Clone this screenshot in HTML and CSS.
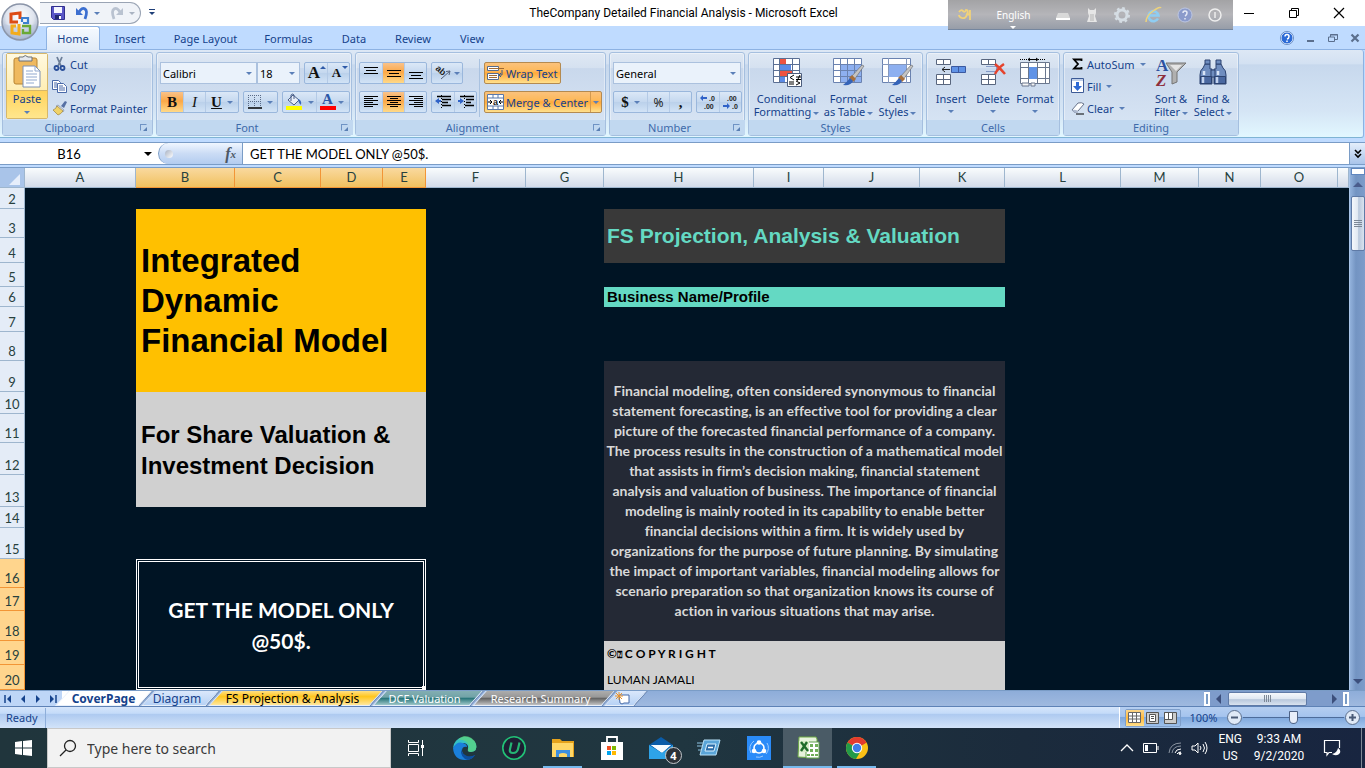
FILE: index.html
```html
<!DOCTYPE html>
<html lang="en">
<head>
    <meta charset="UTF-8">
    <meta name="viewport" content="width=device-width, initial-scale=1.0">
    <title>TheCompany Detailed Financial Analysis - Microsoft Excel</title>
    <link rel="stylesheet" href="styles.css">
</head>
<body>

    <!-- Title bar -->
    <header class="titlebar">
        <button class="office-btn" aria-label="Office Button">
            <svg width="40" height="40" viewBox="0 0 40 40">
                <defs>
                    <radialGradient id="orb" cx="50%" cy="35%" r="65%">
                        <stop offset="0" stop-color="#ffffff"/>
                        <stop offset=".6" stop-color="#dfe4ee"/>
                        <stop offset="1" stop-color="#8f9db8"/>
                    </radialGradient>
                </defs>
                <circle cx="20" cy="20" r="18" fill="url(#orb)" stroke="#8b95a8" stroke-width="1.5"/>
                <path d="M4 22q16 6 32 0a16 15 0 0 1-32 0z" fill="#b9c6e0" opacity=".6"/>
                <g fill="none">
                    <path d="M18 20h-7v-8l9-1v6" stroke="#dd4b14" stroke-width="3"/>
                    <path d="M22 20v-4h6v5h-5" stroke="#3d7fd0" stroke-width="2.2"/>
                    <path d="M19 22v10l-7-1v-7h4" stroke="#f3ac1c" stroke-width="3"/>
                    <path d="M22 24h8v7h-7v-4" stroke="#6aa935" stroke-width="2.4"/>
                </g>
            </svg>
        </button>
        <div class="quick-access">
            <button aria-label="Save">
                <svg width="14" height="14" viewBox="0 0 14 14"><path d="M.5.5h13v13h-11l-2-2z" fill="#5a57c8" stroke="#302f8e"/><path d="M3 1h8v6H3z" fill="#f4f6ff"/><path d="M4 9h6v4H4z" fill="#222a70"/><path d="M8 10h2v3H8z" fill="#fff"/></svg>
            </button>
            <button aria-label="Undo">
                <svg width="14" height="14" viewBox="0 0 14 14"><path d="M4 6Q7 1 10 3t0 10" fill="none" stroke="#3c6fd0" stroke-width="2.8"/><path d="M1 2v7h7z" fill="#3c6fd0"/></svg>
                <span class="caret"></span>
            </button>
            <button aria-label="Redo" disabled>
                <svg width="14" height="14" viewBox="0 0 14 14"><path d="M10 6Q7 1 4 3t0 10" fill="none" stroke="#b9c2d0" stroke-width="2.8"/><path d="M13 2v7H6z" fill="#b9c2d0"/></svg>
                <span class="caret grey"></span>
            </button>
        </div>
        <button class="customize" aria-label="Customize Quick Access Toolbar"><span class="caret dark"></span></button>
        <h1 class="window-title">TheCompany Detailed Financial Analysis - Microsoft Excel</h1>
        <div class="window-buttons">
            <button aria-label="Minimize"><svg width="12" height="12" viewBox="0 0 12 12"><path d="M1 6.500h10" stroke="#000"/></svg></button>
            <button aria-label="Restore"><svg width="12" height="12" viewBox="0 0 12 12" fill="none" stroke="#000"><path d="M1.500 3.500h7v7h-7zM3.500 3.500v-2h7v7h-2"/></svg></button>
            <button aria-label="Close"><svg width="12" height="12" viewBox="0 0 12 12"><path d="M1 1l10 10M11 1L1 11" stroke="#000" stroke-width="1.200"/></svg></button>
        </div>

        <!-- Floating keyboard language bar -->
        <div class="language-bar">
            <svg width="14" height="14" viewBox="0 0 14 14" fill="none" stroke="#f0d27a" stroke-width="1.800"><path d="M1 4q2-3 4-1t3-1q3 0 1 4-1 5-5 4-3-1-3-3M9 6q3 2 3-4v10"/></svg>
            <button class="language">English<span class="caret white"></span></button>
            <svg width="16" height="16" viewBox="0 0 16 16"><path d="M3 6h10l2 5H1z" fill="#d9d9d9"/><path d="M1 11h14v2H1z" fill="#fff"/></svg>
            <svg width="14" height="16" viewBox="0 0 14 16"><path d="M3 1l2 2h4l2-2v5l-1 3 2 6H2l2-6-1-3z" fill="#e6e6e6"/><path d="M6 7v7M8 7v7" stroke="#b5b5b5"/></svg>
            <svg width="16" height="16" viewBox="0 0 16 16"><circle cx="8" cy="8" r="5" fill="none" stroke="#d5dde4" stroke-width="3"/><circle cx="8" cy="8" r="7" fill="none" stroke="#d5dde4" stroke-width="2" stroke-dasharray="2.700 2.800"/></svg>
            <svg width="18" height="18" viewBox="0 0 18 18"><path d="M14 12.500a5 5 0 1 1 .500-3H5" fill="none" stroke="#8fcdf2" stroke-width="2.600"/><path d="M2 16q0-6 7-11t8-3" fill="none" stroke="#ecd27c" stroke-width="1.500"/></svg>
            <svg width="16" height="16" viewBox="0 0 16 16"><circle cx="8" cy="8" r="7" fill="#8b9bcb" stroke="#bcc6e2"/><path d="M6 6q0-2 2-2t2 2-2 3M8 11v1.500" fill="none" stroke="#e5e9f5" stroke-width="1.500"/></svg>
            <svg width="16" height="16" viewBox="0 0 16 16" fill="none" stroke="#eee"><circle cx="8" cy="8" r="6" stroke-width="1.500"/><path d="M8 5v6" stroke-width="1.500"/></svg>
        </div>
    </header>

    <!-- Ribbon tabs -->
    <nav class="tabs">
        <button class="tab active">Home</button>
        <button class="tab insert">Insert</button>
        <button class="tab page-layout">Page Layout</button>
        <button class="tab formulas">Formulas</button>
        <button class="tab data">Data</button>
        <button class="tab review">Review</button>
        <button class="tab view">View</button>
        <div class="doc-buttons">
            <button aria-label="Help"><svg width="14" height="14" viewBox="0 0 14 14"><circle cx="7" cy="7" r="6" fill="#2d6bd6" stroke="#fff" stroke-width=".8"/><circle cx="7" cy="7" r="6.600" fill="none" stroke="#5b82bd" stroke-width=".8"/><path d="M5 5.500Q5 3.500 7 3.500t2 2-2 2.500M7 9.500V11" fill="none" stroke="#fff" stroke-width="1.500"/></svg></button>
            <button aria-label="Minimize workbook"><svg width="10" height="10" viewBox="0 0 10 10"><path d="M1 8h7" stroke="#5b6f8d" stroke-width="2"/></svg></button>
            <button aria-label="Restore workbook"><svg width="10" height="10" viewBox="0 0 10 10"><path d="M.500 4h6v4.500h-6zM2.500 4V1.500h7v5h-3M2 2h8" fill="none" stroke="#5b6f8d"/></svg></button>
            <button aria-label="Close workbook"><svg width="10" height="10" viewBox="0 0 10 10"><path d="M1.500 1.500l7 7M8.500 1.500l-7 7" stroke="#5b6f8d" stroke-width="2.200"/></svg></button>
        </div>
    </nav>

    <!-- Ribbon -->
    <section class="ribbon">
        <div class="group clipboard">
            <div class="group-body">
                <button class="paste">
                    <span class="paste-icon"><svg width="30" height="34" viewBox="0 0 30 34"><rect x="2" y="3" width="23" height="26" rx="2" fill="#efb95e" stroke="#b88431"/><path d="M7 2h4q2-3 5 0h4v4H7z" fill="#e4e8ee" stroke="#6a7078"/><path d="M11 11h12l5 5v16H11z" fill="#fff" stroke="#7c90b4"/><path d="M23 11v5h5M14 16h7M14 19h11M14 22h11M14 25h11M14 28h8" stroke="#91a9cf" fill="none"/></svg></span>
                    <span class="paste-text">Paste<span class="caret"></span></span>
                </button>
                <div class="small-buttons">
                    <button><svg width="16" height="16" viewBox="0 0 16 16"><path d="M5 1l4 9M10 1L6 10" stroke="#6d7f99" stroke-width="1.800"/><circle cx="4.500" cy="12" r="2" fill="none" stroke="#2a4f99" stroke-width="1.800"/><circle cx="10.500" cy="12" r="2" fill="none" stroke="#2a4f99" stroke-width="1.800"/></svg>Cut</button>
                    <button><svg width="16" height="16" viewBox="0 0 16 16" fill="#fff" stroke="#4869a8"><path d="M.500 2.500h6l2 2v7h-8z"/><path d="M5.500 5.500h6l3 3v6h-9z"/><path d="M2 5h3M2 7h3M2 9h3M7 8h4M7 10h6M7 12h6"/></svg>Copy</button>
                    <button><svg width="16" height="16" viewBox="0 0 16 16"><path d="M9 6l4-5 2 1-3 6z" fill="#5670a4"/><path d="M6 5l6 5-1 2-7-6z" fill="#d9dee8" stroke="#76839c" stroke-width=".6"/><path d="M5 6l6 5q-2 3-5 4l-5-5q3-1 4-4z" fill="#f0d268" stroke="#9c8440" stroke-width=".7"/></svg>Format Painter</button>
                </div>
            </div>
            <div class="group-name">Clipboard<i class="launcher"></i></div>
        </div>

        <div class="group font">
            <div class="group-body rows">
                <div class="row">
                    <span class="combo font-name"><select aria-label="Font"><option>Calibri</option></select></span>
                    <span class="combo font-size"><select aria-label="Font size"><option>18</option></select></span>
                    <div class="cluster after">
                        <button class="serif big-a" aria-label="Grow Font">A<i class="up"></i></button>
                        <button class="serif small-a" aria-label="Shrink Font">A<i class="caret"></i></button>
                    </div>
                </div>
                <div class="row">
                    <div class="cluster">
                        <button class="serif on"><b>B</b></button>
                        <button class="serif"><i>I</i></button>
                        <button class="serif wide"><u>U</u><span class="caret"></span></button>
                    </div>
                    <div class="cluster">
                        <button class="wide" aria-label="Borders"><svg width="14" height="14" viewBox="0 0 14 14"><path d="M0 .500h14M0 6.500h14M.500 0v12M6.500 0v12M12.500 0v12" stroke="#5a6b88" stroke-dasharray="1 1"/><path d="M0 13h14" stroke="#000" stroke-width="1.500"/></svg><span class="caret"></span></button>
                    </div>
                    <div class="cluster">
                        <button class="wide" aria-label="Fill Color"><svg width="18" height="16" viewBox="0 0 18 16"><path d="M8 1l6 5-5 5-6-5z" fill="#e8eef8" stroke="#4a5f88"/><path d="M6 7V1q2-2 3 0v4" fill="none" stroke="#4a5f88"/><path d="M13 5q4 1 3 6-2-1-3-5z" fill="#3a69b8"/><path d="M1 12h16v4H1z" fill="#ff0"/></svg><span class="caret"></span></button>
                        <button class="wide font-color serif" aria-label="Font Color">A<span class="caret"></span></button>
                    </div>
                </div>
            </div>
            <div class="group-name">Font<i class="launcher"></i></div>
        </div>

        <div class="group alignment">
            <div class="group-body rows">
                <div class="row">
                    <div class="cluster">
                        <button aria-label="Top Align"><svg width="14" height="14" viewBox="0 0 14 14" stroke="#000"><path d="M0 1.500h14M2 4.500h10M0 7.500h14" /></svg></button>
                        <button class="on" aria-label="Middle Align"><svg width="14" height="14" viewBox="0 0 14 14" stroke="#000"><path d="M0 4.500h14M2 7.500h10M0 10.500h14"/></svg></button>
                        <button aria-label="Bottom Align"><svg width="14" height="14" viewBox="0 0 14 14" stroke="#000"><path d="M0 6.500h14M2 9.500h10M0 12.500h14"/></svg></button>
                    </div>
                    <div class="cluster">
                        <button class="orient" aria-label="Orientation"><svg width="16" height="18" viewBox="0 0 16 18"><text x="0" y="9" transform="rotate(40 5 7)" class="ab">ab</text><path d="M6 15l9-8M15 7l-4 .500M15 7l-1 4" fill="none" stroke="#53617c"/></svg><span class="caret"></span></button>
                    </div>
                </div>
                <div class="row">
                    <div class="cluster">
                        <button aria-label="Align Left"><svg width="14" height="12" viewBox="0 0 14 12" stroke="#000"><path d="M0 .500h14M0 2.500h9M0 4.500h14M0 6.500h9M0 8.500h14M0 10.500h9"/></svg></button>
                        <button class="on" aria-label="Center"><svg width="14" height="12" viewBox="0 0 14 12" stroke="#000"><path d="M0 .500h14M3 2.500h8M0 4.500h14M3 6.500h8M0 8.500h14M3 10.500h8"/></svg></button>
                        <button aria-label="Align Right"><svg width="14" height="12" viewBox="0 0 14 12" stroke="#000"><path d="M0 .500h14M5 2.500h9M0 4.500h14M5 6.500h9M0 8.500h14M5 10.500h9"/></svg></button>
                    </div>
                    <div class="cluster">
                        <button aria-label="Decrease Indent"><svg width="16" height="14" viewBox="0 0 16 14"><path d="M2 1.500h14M7 4.500h9M7 7.500h6M7 10.500h9" stroke="#000" stroke-width="1.600"/><path d="M6.500 0v14" stroke="#000" stroke-dasharray="1 2"/><path d="M0 6l4-3v2h2v2H4v2z" fill="#2f62c8"/></svg></button>
                        <button aria-label="Increase Indent"><svg width="16" height="14" viewBox="0 0 16 14"><path d="M2 1.500h14M8 4.500h8M8 7.500h5M7 10.500h9" stroke="#000" stroke-width="1.600"/><path d="M6.500 0v14" stroke="#000" stroke-dasharray="1 2"/><path d="M6 6L2 3v2H0v2h2v2z" fill="#2f62c8"/></svg></button>
                    </div>
                </div>
            </div>
            <div class="align-text">
                <button class="orange"><svg width="17" height="16" viewBox="0 0 17 16"><path d="M.500 1.500h11v4H.500zM.500 8.500h11v6H.500z" fill="#fff" stroke="#566a8c"/><path d="M2 3.500h15M2 10.500h8M2 12.500h8" stroke="#a06a32"/><path d="M15 5v5h-3M14 8l-2 2 2 2" fill="none" stroke="#3c5888"/></svg>Wrap Text</button>
                <button class="orange merge"><svg width="17" height="16" viewBox="0 0 17 16"><path d="M.500.500h16v15H.500zM.500 4h16M.500 12h16M6 0v4M11 0v4M6 12v4M11 12v4" fill="#fff" stroke="#5a78aa"/><text x="6" y="11" class="merge-a">a</text><path d="M1 8h4M3 6l2 2-2 2M12 8h4M14 6l-2 2 2 2" fill="none" stroke="#000"/></svg>Merge &amp; Center<span class="drop"><span class="caret"></span></span></button>
            </div>
            <div class="group-name">Alignment<i class="launcher"></i></div>
        </div>

        <div class="group number">
            <div class="group-body rows">
                <div class="row">
                    <span class="combo format"><select aria-label="Number format"><option>General</option></select></span>
                </div>
                <div class="row">
                    <div class="cluster">
                        <button class="wide serif dollar"><b>$</b><span class="caret"></span></button>
                        <button class="percent">%</button>
                        <button class="serif comma"><b>,</b></button>
                    </div>
                    <div class="cluster">
                        <button class="decimals" aria-label="Increase Decimal"><svg width="18" height="18" viewBox="0 0 18 18"><path d="M1 5l3-3v2h4v2H4v2z" fill="#2f62c8"/><text x="10" y="8">.0</text><text x="5" y="16">.00</text></svg></button>
                        <button class="decimals" aria-label="Decrease Decimal"><svg width="18" height="18" viewBox="0 0 18 18"><text x="5" y="8">.00</text><path d="M8 13l-3-3v2H1v2h4v2z" fill="#2f62c8"/><text x="10" y="16">.0</text></svg></button>
                    </div>
                </div>
            </div>
            <div class="group-name">Number<i class="launcher"></i></div>
        </div>

        <div class="group styles">
            <div class="group-body bigs">
                <button class="big conditional">
                    <svg width="32" height="30" viewBox="0 0 32 30"><path d="M2.500.500h26v24h-26z" fill="#fff" stroke="#5a6f94"/><path d="M9 1h6v5H9zM9 13h12v5H9z" fill="#ee5340"/><path d="M9 7h11v5H9zM9 19h5v5H9z" fill="#5b8be6"/><path d="M2 6.500h26M2 12.500h26M2 18.500h26M8.500 0v25M21.500 0v25" stroke="#5a6f94" fill="none"/><path d="M16.500 15.500h14v13h-14z" fill="#fff" stroke="#4b5c7c"/><path d="M23 17l-4 2.500 4 2.500M18 24h5M18 26h5M25 19h5M25 21.500h5M29 17l-3 6M25 23l4 2-4 2" fill="none" stroke="#000"/></svg>
                    <span>Conditional</span><span>Formatting<i class="caret"></i></span>
                </button>
                <button class="big as-table">
                    <svg width="32" height="30" viewBox="0 0 32 30"><path d="M.500.500h28v24H.500z" fill="#fff" stroke="#6a82b0"/><path d="M8 7h20v17H8z" fill="#8eb0f0"/><path d="M0 6.500h28M0 12.500h28M0 18.500h28M7.500 0v25M14.500 0v25M21.500 0v25" stroke="#6a82b0" fill="none"/><path d="M31 8l-2-1-11 12 3 3z" fill="#c4c4c4" stroke="#666" stroke-width=".6"/><path d="M19 17l4 4-3 3-4-4z" fill="#a8703c"/><path d="M17 20l3 3q-2 5-10 4 4-3 7-7z" fill="#3463b8"/></svg>
                    <span>Format</span><span>as Table<i class="caret"></i></span>
                </button>
                <button class="big cell-styles">
                    <svg width="32" height="30" viewBox="0 0 32 30"><path d="M.500.500h28v24H.500z" fill="#fff" stroke="#6a82b0"/><path d="M0 6.500h28M0 18.500h28M6.500 0v25M24.500 0v25" stroke="#8598bd" fill="none"/><path d="M7 7h17v12H7z" fill="#8eb0f0"/><path d="M31 8l-2-1-11 12 3 3z" fill="#c4c4c4" stroke="#666" stroke-width=".6"/><path d="M19 17l4 4-3 3-4-4z" fill="#a8703c"/><path d="M17 20l3 3q-2 5-10 4 4-3 7-7z" fill="#3463b8"/></svg>
                    <span>Cell</span><span>Styles<i class="caret"></i></span>
                </button>
            </div>
            <div class="group-name">Styles</div>
        </div>

        <div class="group cells">
            <div class="group-body bigs">
                <button class="big">
                    <svg width="32" height="30" viewBox="0 0 32 30"><path d="M1.500 1.500h14v5h-14zM1.500 16.500h14v10h-14zM8.500 1.500v5M8.500 16.500v10M1.500 21.500h14" fill="#fff" stroke="#59667e"/><path d="M16.500 8.500h14v6h-14z" fill="#5f92e6" stroke="#3b59a0"/><path d="M23.500 8v6" stroke="#3b59a0"/><path d="M7 11.500h8M10 9l-3 2.500 3 2.500" fill="none" stroke="#222"/></svg>
                    <span>Insert</span><i class="caret"></i>
                </button>
                <button class="big">
                    <svg width="32" height="30" viewBox="0 0 32 30"><path d="M4.500 1.500h14v5h-14zM4.500 16.500h14v10h-14zM11.500 1.500v5M11.500 16.500v10M4.500 21.500h14" fill="#fff" stroke="#59667e"/><path d="M9.500 8.500h10v5h-10" fill="none" stroke="#3b59a0" stroke-dasharray="1 1"/><path d="M18 6q5 4 10 10M27 6q-6 4-9 10" stroke="#e5432d" stroke-width="2.500" fill="none"/></svg>
                    <span>Delete</span><i class="caret"></i>
                </button>
                <button class="big">
                    <svg width="32" height="30" viewBox="0 0 32 30"><path d="M1.500 4.500h29v21h-29z" fill="#fff" stroke="#6a778e"/><path d="M9.500 4v22M18.500 4v22M26.500 4v22M1 9.500h29M1 20.500h29" stroke="#6a778e"/><path d="M10 9h8v12h-8z" fill="#5f92e6"/><path d="M9 1.500h9M11 0L9 1.500 11 3M17 0l2 1.500L17 3" fill="none" stroke="#000"/><path d="M1 1.500h8M19 1.500h8" stroke="#000" stroke-dasharray="1 1"/><path d="M3 25h7v3H3zM12 25h4v3h-4z" fill="#f5f5f5" stroke="#6a778e"/></svg>
                    <span>Format</span><i class="caret"></i>
                </button>
            </div>
            <div class="group-name">Cells</div>
        </div>

        <div class="group editing">
            <div class="group-body">
                <div class="small-buttons">
                    <button><svg width="14" height="14" viewBox="0 0 14 14"><path d="M10.500 4V2.500H3l4 4.500-4 4.500h7.500V10" fill="none" stroke="#000" stroke-width="1.800"/></svg>AutoSum<span class="caret"></span></button>
                    <button><svg width="14" height="16" viewBox="0 0 14 16"><path d="M.500.500h12v14H.500z" fill="#fff" stroke="#3c5a96"/><path d="M1 1h11v2H1z" fill="#bfcfe8"/><path d="M5 4h3v4h3l-4.500 5L2 8h3z" fill="#2f6ad4"/></svg>Fill<span class="caret"></span></button>
                    <button><svg width="14" height="14" viewBox="0 0 14 14"><path d="M1 9l6-7q4-1 6 1l-6 7q-3 3-6-1z" fill="#fff" stroke="#68748c"/><path d="M1 9q3-1 6 1v2q-4 0-6-3z" fill="#aebad0"/><path d="M5 13h8" stroke="#000"/></svg>Clear<span class="caret"></span></button>
                </div>
                <div class="bigs">
                    <button class="big">
                        <svg width="32" height="30" viewBox="0 0 32 30"><path d="M11 5h20l-9 9v10l-5 2V14z" fill="#b0b0b0" stroke="#757575"/><path d="M15 7h12l-6 6z" fill="#e4e4e4"/><text x="1" y="13" class="sort-a">A</text><text x="1" y="28" class="sort-z">Z</text></svg>
                        <span>Sort &amp;</span><span>Filter<i class="caret"></i></span>
                    </button>
                    <button class="big">
                        <svg width="32" height="30" viewBox="0 0 32 30" fill="#6f8dbf" stroke="#2c4370"><path d="M8 6h5v5h2v15H3V17q0-5 3-7zM19 6h5l2 4q3 2 3 7v9H17V11h2z"/><path d="M8 2h5v4H8zM19 2h5v4h-5zM14 12h4v7h-4z"/><path d="M7 13v4M21 13v4" stroke="#d8e4f6" stroke-width="2.500"/><path d="M3.500 18.500h11v7h-11zM17.500 18.500h11v7h-11z" fill="#4a68a0"/><path d="M6 19v6M20 19v6" stroke="#c3d3ee" stroke-width="2.500"/></svg>
                        <span>Find &amp;</span><span>Select<i class="caret"></i></span>
                    </button>
                </div>
            </div>
            <div class="group-name">Editing</div>
        </div>
    </section>

    <!-- Formula bar -->
    <section class="formula-bar">
        <input class="name-box" aria-label="Name Box" value="B16">
        <button class="name-drop" aria-label="Named ranges"><span class="caret black"></span></button>
        <div class="fx-area"><span class="knob"></span><button class="fx">f<small>x</small></button></div>
        <input class="formula" aria-label="Formula" value="GET THE MODEL ONLY @50$.">
        <button class="expand" aria-label="Expand Formula Bar"><svg width="8" height="10" viewBox="0 0 8 10"><path d="M1 1l3 3 3-3M1 5l3 3 3-3" fill="none" stroke="#000" stroke-width="1.600"/></svg></button>
    </section>

    <!-- Worksheet -->
    <main class="workbook">
        <div class="sheet-wrap">
            <table class="sheet">
                <colgroup>
                    <col class="c-head"><col class="c-a"><col class="c-b"><col class="c-c"><col class="c-d"><col class="c-e"><col class="c-f"><col class="c-g"><col class="c-h"><col class="c-i"><col class="c-j"><col class="c-k"><col class="c-l"><col class="c-m"><col class="c-n"><col class="c-o"><col>
                </colgroup>
                <thead>
                    <tr>
                        <th class="corner"><svg width="11" height="11" viewBox="0 0 11 11"><path d="M11 0v11H0z" fill="#e6eefb"/></svg></th>
                        <th>A</th><th class="sel">B</th><th class="sel">C</th><th class="sel">D</th><th class="sel">E</th><th>F</th><th>G</th><th>H</th><th>I</th><th>J</th><th>K</th><th>L</th><th>M</th><th>N</th><th>O</th><th></th>
                    </tr>
                </thead>
                <tbody>
                    <tr class="r2"><th>2</th><td colspan="16"></td></tr>
                    <tr class="r3"><th>3</th><td></td><td class="model-title" colspan="4" rowspan="7">Integrated<br>Dynamic<br>Financial Model</td><td colspan="2"></td><td class="fs-title" colspan="4" rowspan="2">FS Projection, Analysis &amp; Valuation</td><td colspan="5"></td></tr>
                    <tr class="r4"><th>4</th><td></td><td colspan="2"></td><td colspan="5"></td></tr>
                    <tr class="r5"><th>5</th><td></td><td colspan="11"></td></tr>
                    <tr class="r6"><th>6</th><td></td><td colspan="2"></td><td class="business" colspan="4">Business Name/Profile</td><td colspan="5"></td></tr>
                    <tr class="r7"><th>7</th><td></td><td colspan="11"></td></tr>
                    <tr class="r8"><th>8</th><td></td><td colspan="11"></td></tr>
                    <tr class="r9"><th>9</th><td></td><td colspan="2"></td><td class="profile" colspan="4" rowspan="10">Financial modeling, often considered synonymous to financial<br>statement forecasting, is an effective tool for providing a clear<br>picture of the forecasted financial performance of a company.<br>The process results in the construction of a mathematical model<br>that assists in firm’s decision making, financial statement<br>analysis and valuation of business. The importance of financial<br>modeling is mainly rooted in its capability to enable better<br>financial decisions within a firm. It is widely used by<br>organizations for the purpose of future planning. By simulating<br>the impact of important variables, financial modeling allows for<br>scenario preparation so that organization knows its course of<br>action in various situations that may arise.</td><td colspan="5"></td></tr>
                    <tr class="r10"><th>10</th><td></td><td class="model-sub" colspan="4" rowspan="4">For Share Valuation &amp;<br>Investment Decision</td><td colspan="2"></td><td colspan="5"></td></tr>
                    <tr class="r11"><th>11</th><td></td><td colspan="2"></td><td colspan="5"></td></tr>
                    <tr class="r12"><th>12</th><td></td><td colspan="2"></td><td colspan="5"></td></tr>
                    <tr class="r13"><th>13</th><td></td><td colspan="2"></td><td colspan="5"></td></tr>
                    <tr class="r14"><th>14</th><td colspan="7"></td><td colspan="5"></td></tr>
                    <tr class="r15"><th>15</th><td colspan="7"></td><td colspan="5"></td></tr>
                    <tr class="r16"><th class="sel">16</th><td></td><td class="offer" colspan="4" rowspan="5"><div class="selection">GET THE MODEL ONLY<br>@50$.</div></td><td colspan="2"></td><td colspan="5"></td></tr>
                    <tr class="r17"><th class="sel">17</th><td></td><td colspan="2"></td><td colspan="5"></td></tr>
                    <tr class="r18"><th class="sel">18</th><td></td><td colspan="2"></td><td colspan="5"></td></tr>
                    <tr class="r19"><th class="sel">19</th><td></td><td colspan="2"></td><td class="copyright" colspan="4"><b>©<span class="box-char">⍰</span> C O P Y R I G H T</b></td><td colspan="5"></td></tr>
                    <tr class="r20"><th class="sel">20</th><td></td><td colspan="2"></td><td class="copyright" colspan="4">LUMAN JAMALI</td><td colspan="5"></td></tr>
                </tbody>
            </table>
        </div>
        <div class="v-scroll">
            <span class="split"></span>
            <i class="up"></i>
            <span class="v-thumb"></span>
            <i class="caret"></i>
        </div>
    </main>

    <!-- Sheet tabs -->
    <nav class="sheet-tabs">
        <div class="tab-arrows">
            <button aria-label="First sheet"><svg width="8" height="8" viewBox="0 0 8 8"><path d="M1 0v8" stroke="#15428b" stroke-width="1.500"/><path d="M7 0v8L3 4z" fill="#15428b"/></svg></button>
            <button aria-label="Previous sheet"><svg width="8" height="8" viewBox="0 0 8 8"><path d="M6 0v8L2 4z" fill="#15428b"/></svg></button>
            <button aria-label="Next sheet"><svg width="8" height="8" viewBox="0 0 8 8"><path d="M2 0v8l4-4z" fill="#15428b"/></svg></button>
            <button aria-label="Last sheet"><svg width="8" height="8" viewBox="0 0 8 8"><path d="M1 0v8l4-4z" fill="#15428b"/><path d="M7 0v8" stroke="#15428b" stroke-width="1.500"/></svg></button>
        </div>
        <button class="sheet-tab cover">CoverPage</button>
        <button class="sheet-tab diagram">Diagram</button>
        <button class="sheet-tab projection">FS Projection &amp; Analysis</button>
        <button class="sheet-tab dcf">DCF Valuation</button>
        <button class="sheet-tab research">Research Summary</button>
        <button class="sheet-tab new" aria-label="Insert Worksheet"><svg width="16" height="13" viewBox="0 0 16 13"><path d="M4 3h10v8h-5q-2 2-4 0z" fill="#fff" stroke="#4469a8"/><path d="M4 0v8M0 4h8M1 1l6 6M7 1L1 7" stroke="#e8922a"/></svg></button>
        <div class="h-scroll">
            <span class="split"></span>
            <i class="left"></i>
            <span class="h-thumb"></span>
            <i class="right"></i>
            <span class="split"></span>
        </div>
    </nav>

    <!-- Status bar -->
    <footer class="status-bar">
        <span class="ready">Ready</span>
        <div class="status-right">
            <div class="views">
                <button class="on" aria-label="Normal"><svg width="14" height="12" viewBox="0 0 14 12"><path d="M.500.500h12v10H.500zM.500 4h12M.500 7h12M4.500.500v10M8.500.500v10" fill="#fff" stroke="#666"/></svg></button>
                <button aria-label="Page Layout"><svg width="14" height="12" viewBox="0 0 14 12"><path d="M.500.500h12v11H.500z" fill="#ccc" stroke="#555"/><path d="M3.500 2.500h6v7h-6zM5 4.500h3M5 6.500h3" fill="#fff" stroke="#555"/></svg></button>
                <button aria-label="Page Break Preview"><svg width="14" height="12" viewBox="0 0 14 12"><path d="M.500.500h12v11H.500z" fill="#ccc" stroke="#555"/><path d="M.500.500h8v7h-8zM4.500.500v7" fill="#fff" stroke="#555"/></svg></button>
            </div>
            <span class="zoom-text">100%</span>
            <button class="zoom-btn" aria-label="Zoom Out"><svg width="17" height="17" viewBox="0 0 17 17"><circle cx="8.500" cy="8.500" r="7" fill="#dfe9f6" stroke="#5b6f8d"/><path d="M5 8.500h7" stroke="#4a5b76" stroke-width="2"/></svg></button>
            <input class="zoom" type="range" aria-label="Zoom" min="0" max="100" value="50">
            <button class="zoom-btn" aria-label="Zoom In"><svg width="17" height="17" viewBox="0 0 17 17"><circle cx="8.500" cy="8.500" r="7" fill="#dfe9f6" stroke="#5b6f8d"/><path d="M5 8.500h7M8.500 5v7" stroke="#4a5b76" stroke-width="2"/></svg></button>
        </div>
    </footer>

    <!-- Windows taskbar -->
    <footer class="taskbar">
        <button class="start" aria-label="Start"><svg width="17" height="16" viewBox="0 0 17 16" fill="#fff"><path d="M0 2l7-1v6.500H0zM8 1l9-1v7.500H8zM0 8.500h7V15l-7-1zM8 8.500h9V16l-9-1z"/></svg></button>
        <label class="search">
            <svg width="18" height="18" viewBox="0 0 18 18" fill="none" stroke="#222" stroke-width="1.300"><circle cx="11" cy="7" r="5.500"/><path d="M7 11l-6 6"/></svg>
            <input type="text" aria-label="Search" placeholder="Type here to search">
        </label>
        <button class="app" aria-label="Task View"><svg width="18" height="16" viewBox="0 0 18 16" fill="none" stroke="#fff"><path d="M1.500 4.500h10v7h-10zM1.500 0v2.500h10V0M1.500 16v-2.500h10V16M15.500 0v16"/><path d="M14 5h3v3h-3z" fill="#fff" stroke="none"/></svg></button>
        <button class="app" aria-label="Microsoft Edge"><svg width="26" height="26" viewBox="0 0 26 26"><path d="M1 13A12 12 0 0 1 24 9q2 7-5 8-4 0-3-3 1-5-4-6-7 0-11 5z" fill="#35c1c6"/><path d="M12 1q9 0 12 8 2 7-5 8-4 0-3-3 2-3 0-5-4-5-10-4 2-3 6-4z" fill="#5fd479" opacity=".7"/><path d="M1 13q4-7 10-5 4 1 4 4-5-1-5 4 1 6 8 6 3 0 5-2-3 5-10 5-11 0-12-12z" fill="#1a7fdb"/><path d="M9 14q-1 9 7 11 5-1 7-5-4 2-8 1-5-2-6-7z" fill="#0d4f9e"/></svg></button>
        <button class="app" aria-label="Uninstaller"><svg width="26" height="26" viewBox="0 0 26 26"><circle cx="13" cy="13" r="11.200" fill="#1d1f33" stroke="#22c277" stroke-width="1.600"/><path d="M10.500 7.500L9 14q-1 4 3 4t5-4l1.500-6.500" fill="none" stroke="#25b574" stroke-width="2.200"/></svg></button>
        <button class="app running" aria-label="File Explorer"><svg width="24" height="22" viewBox="0 0 24 22"><path d="M1 2h8l2 2h12v16H1z" fill="#e5a21c"/><path d="M1 6h21v14H1z" fill="#ffd767"/><path d="M5 20v-7h14v7h-3v-3q-4-2-8 0v3z" fill="#3d8fe0"/></svg></button>
        <button class="app" aria-label="Microsoft Store"><svg width="24" height="26" viewBox="0 0 24 26"><path d="M7 7V2h10v5" fill="none" stroke="#fff" stroke-width="1.800"/><path d="M1 7h22v18H1z" fill="#fff"/><path d="M7 11h4v4H7z" fill="#f25022"/><path d="M12 11h4v4h-4z" fill="#7fba00"/><path d="M7 16h4v4H7z" fill="#00a4ef"/><path d="M12 16h4v4h-4z" fill="#ffb900"/></svg></button>
        <button class="app mail" aria-label="Mail"><svg width="26" height="24" viewBox="0 0 26 24"><path d="M1 9l12-8 12 8v13H1z" fill="#0a5ca8"/><path d="M3 9h20l-9 8z" fill="#fff"/><path d="M1 9l13 8 11-8v14H1z" fill="#2ea3e8"/><path d="M3 9h20l-10 7z" fill="#f4fbff"/></svg><span class="badge">4</span></button>
        <button class="app" aria-label="Run"><svg width="26" height="20" viewBox="0 0 26 20"><path d="M7 2h16l-4 15H3z" fill="#5aa5d8" stroke="#b9e2f8"/><path d="M10 6h9l-2 7H8z" fill="#2a6ca8" stroke="#d9f1ff"/><path d="M11 9.500h5" stroke="#fff" stroke-width="1.500"/><path d="M0 5h6M0 8h5M1 12h3" stroke="#8fc5e4"/></svg></button>
        <button class="app" aria-label="SHAREit"><svg width="24" height="24" viewBox="0 0 24 24"><path d="M0 0h24v24H0z" fill="#2a8bf8"/><circle cx="12" cy="12" r="5" fill="none" stroke="#fff" stroke-width="1.600"/><circle cx="12" cy="6.500" r="2.300" fill="#fff"/><circle cx="7" cy="15" r="2.300" fill="#fff"/><circle cx="17" cy="15" r="2.300" fill="#fff"/><path d="M4 17a9 9 0 0 1 3-12M20 7a9 9 0 0 1-1 11M9 21q4 1 7-1" fill="none" stroke="#9ccbff"/></svg></button>
        <button class="app running current" aria-label="Excel"><svg width="24" height="24" viewBox="0 0 24 24"><path d="M3 1h17l1 2v19L2 21z" fill="#e7f3dd" stroke="#6ca845"/><path d="M10 6h13v16H10z" fill="#fff" stroke="#5f9e4a"/><path d="M14 8h3v3h-3zM19 8h3v3h-3zM14 13h3v3h-3zM19 13h3v3h-3zM11 18h3v2h-3zM15 18h3v2h-3zM19 18h3v2h-3z" fill="#6fae57"/><path d="M3 5h10v11H3z" fill="#d9edc9"/><path d="M5 6l7 9M11 6l-6 9" stroke="#1f6b2b" stroke-width="2.400"/></svg></button>
        <button class="app running" aria-label="Chrome"><svg width="24" height="24" viewBox="0 0 24 24"><circle cx="12" cy="12" r="11" fill="#fbc116"/><path d="M12 12L2.500 6.500A11 11 0 0 1 21.500 6.500z" fill="#e33b2e"/><path d="M12 6.500h9.500L12 12z" fill="#e33b2e"/><path d="M12 12L2.500 6.500A11 11 0 0 0 11 23l5-8.500z" fill="#229a49"/><circle cx="12" cy="12" r="5.200" fill="#fff"/><circle cx="12" cy="12" r="4.200" fill="#3f7ee8"/></svg></button>
        <div class="tray">
            <button aria-label="Show hidden icons"><svg width="14" height="10" viewBox="0 0 14 10"><path d="M1 8l6-6 6 6" fill="none" stroke="#fff" stroke-width="1.300"/></svg></button>
            <svg width="16" height="10" viewBox="0 0 16 10"><path d="M.500.500h13v9H.500zM15 3v4" fill="none" stroke="#fff"/><path d="M2 2h3v6H2z" fill="#fff"/></svg>
            <svg width="14" height="14" viewBox="0 0 14 14" fill="none" stroke="#8b95a2"><path d="M1 12Q2 2 13 2"/><path d="M4 12q1-7 9-7"/><path d="M7 12q1-4 6-4M9 13q1-2 4-2" stroke="#fff"/><circle cx="12" cy="12.500" r="1" fill="#fff" stroke="#fff"/></svg>
            <svg width="18" height="14" viewBox="0 0 18 14" fill="none" stroke="#fff"><path d="M1 5h3l3-3v10L4 9H1zM9 5q2 2 0 4M12 3q3 4 0 8M14 1q4 6 0 12"/></svg>
            <div class="lang">ENG<br>US</div>
            <div class="clock">9:33 AM<br>9/2/2020</div>
            <button class="notif" aria-label="Notifications"><svg width="18" height="18" viewBox="0 0 18 18"><path d="M9 13.500H6L4 16v-2.500H1.500v-12h15V9" fill="none" stroke="#fff" stroke-width="1.200"/><path d="M15 9q-1 5-6 6 5 3 8-1 1-3-2-5z" fill="#fff"/></svg></button>
        </div>
    </footer>

</body>
</html>
```
FILE: styles.css
```css
* {
    box-sizing: border-box;
}
body {
    margin: 0;
    height: 100vh;
    display: flex;
    flex-direction: column;
    overflow: hidden;
    background-color: #bfdbff;
    font-family: "Noto Sans", "Open Sans", sans-serif;
    font-size: 11px;
    color: #15428b;
}
button {
    display: flex;
    align-items: center;
    justify-content: center;
    padding: 0;
    border: none;
    background: none;
    font: inherit;
    color: inherit;
    white-space: nowrap;
}
svg {
    display: block;
    flex: none;
    overflow: visible;
}
input, select {
    font: inherit;
    border: none;
    outline: none;
    padding: 0;
    margin: 0;
}

/* little arrows */
.caret, .up, .left, .right {
    display: inline-block;
    flex: none;
    width: 0;
    height: 0;
    border: 3px solid transparent;
}
.caret {
    border-bottom: none;
    border-top-color: #5a7fb8;
}
.up {
    border-top: none;
    border-bottom-color: #2f5aa8;
}
.left {
    border-width: 5px;
    border-left: none;
    border-right-color: #3c4f7c;
}
.right {
    border-width: 5px;
    border-right: none;
    border-left-color: #3c4f7c;
}
.caret.grey { border-top-color: #a9b3c2; }
.caret.dark { border-top-color: #1f3f78; }
.caret.white { border-top-color: #fff; }
.caret.black { border-width: 4px; border-bottom: none; border-top-color: #000; }

/* title bar */
.titlebar {
    position: relative;
    z-index: 2;
    display: flex;
    align-items: center;
    height: 26px;
    background-color: #fff;
}
.office-btn {
    align-self: flex-start;
    width: 40px;
    height: 44px;
}
.quick-access {
    display: flex;
    align-items: center;
    gap: 10px;
    width: 101px;
    height: 22px;
    padding-left: 11px;
    border: 1px solid #9aa4b4;
    border-left: none;
    border-radius: 0 11px 11px 0;
    background-color: #f0f3f8;
}
.quick-access button {
    gap: 5px;
}
.customize {
    width: 22px;
}
.customize .caret {
    position: relative;
}
.customize .caret::before {
    content: "";
    position: absolute;
    left: -3px;
    top: -6px;
    width: 6px;
    height: 1px;
    background-color: #1f3f78;
}
.window-title {
    flex: 1;
    margin: 0;
    padding-right: 22px;
    text-align: center;
    font-family: Roboto, "Noto Sans", sans-serif;
    font-size: 12px;
    font-weight: normal;
    color: #000;
}
.window-buttons {
    display: flex;
    padding-right: 4px;
}
.window-buttons button {
    width: 45px;
    height: 24px;
}
.language-bar {
    position: absolute;
    right: 132px;
    top: 0;
    display: flex;
    align-items: center;
    justify-content: space-between;
    width: 285px;
    height: 30px;
    padding: 0 10px;
    background: linear-gradient(#a3a3a5, #b5b5b9 50%, #979da8);
    border-bottom: 1px solid #74869f;
    color: #fff;
    font-size: 10px;
}
.language {
    position: relative;
    width: 54px;
    height: 26px;
}
.language .caret {
    position: absolute;
    bottom: -1px;
}

/* ribbon tabs */
.tabs {
    display: flex;
    height: 24px;
    padding-left: 46px;
    border-bottom: 1px solid #8db2e3;
}
.tab {
    height: 24px;
    margin-right: 1px;
}
.tab.active {
    width: 54px;
    border: 1px solid #8db2e3;
    border-bottom: none;
    border-radius: 3px 3px 0 0;
    background: linear-gradient(#f6faff, #e1ebf8);
    box-shadow: inset 0 2px 0 #fff;
}
.insert { width: 58px; }
.page-layout { width: 91px; }
.formulas { width: 73px; }
.data { width: 56px; }
.review { width: 60px; }
.view { width: 56px; }
.doc-buttons {
    display: flex;
    align-items: center;
    gap: 12px;
    margin-left: auto;
    padding-right: 5px;
}

/* ribbon */
.ribbon {
    display: flex;
    gap: 3px;
    height: 88px;
    margin-right: 1px;
    padding: 2px 0 1px 2px;
    border-bottom: 1px solid #7fb4d4;
    border-right: 1px solid #8db2e3;
    border-radius: 0 3px 3px 0;
    background: linear-gradient(#dde8f5, #d3e1f2 16%, #c7d8ed 17%, #d5e5f5 70%, #e2f7ff);
}
.group {
    display: grid;
    grid-template: 1fr 15px / auto 1fr;
    flex: none;
    border: 1px solid #a5bfdf;
    border-radius: 3px;
    box-shadow: inset 0 0 0 1px rgba(255, 255, 255, 0.4);
    background: linear-gradient(#dfe8f4, #d5e1f0 18%, #c9d8ec 19%, #d9e6f5);
}
.group-name {
    grid-column: 1 / 3;
    grid-row: 2;
    position: relative;
    line-height: 16px;
    text-align: center;
    padding-right: 16px;
    background-color: #c1d8f0;
    color: #3e6aaa;
}
.styles .group-name, .cells .group-name, .editing .group-name {
    padding-right: 0;
}
.launcher {
    position: absolute;
    right: 5px;
    top: 4px;
    width: 7px;
    height: 7px;
    border: 1px solid #6f93c4;
    border-right-color: transparent;
    border-bottom-color: transparent;
}
.launcher::after {
    content: "";
    position: absolute;
    right: -1px;
    bottom: -1px;
    border: 2px solid #5b80b4;
    border-top-color: transparent;
    border-left-color: transparent;
}
.clipboard { width: 151px; }
.font { width: 196px; }
.alignment { width: 251px; }
.number { width: 136px; }
.styles { width: 175px; }
.cells { width: 134px; }
.editing { width: 176px; }
.group-body {
    display: flex;
    padding: 0 3px;
}
.group-body.rows {
    flex-direction: column;
    gap: 7px;
    padding-top: 9px;
}
.row {
    display: flex;
    gap: 4px;
    height: 22px;
}
.paste {
    flex-direction: column;
    width: 42px;
    height: 66px;
    border: 1px solid #d6b76a;
    border-radius: 2px;
}
.paste-icon {
    width: 100%;
    height: 36px;
    padding: 1px 5px;
    background: linear-gradient(#fff9e0, #ffeeb5);
}
.paste-text {
    display: flex;
    flex-direction: column;
    align-items: center;
    gap: 4px;
    flex: 1;
    width: 100%;
    border-top: 1px solid #d6b76a;
    background: linear-gradient(#ffd35c, #ffe68d);
    line-height: 16px;
}
.small-buttons {
    display: flex;
    flex-direction: column;
    align-items: flex-start;
    padding-left: 4px;
}
.small-buttons button {
    gap: 2px;
    height: 22px;
}
.small-buttons .caret {
    margin-left: 3px;
}
.combo {
    position: relative;
    height: 22px;
    border: 1px solid #abc1de;
    background-color: #eaf2fb;
}
.combo::after {
    content: "";
    position: absolute;
    right: 4px;
    top: 9px;
    border: 3px solid transparent;
    border-bottom: none;
    border-top-color: #5a7fb8;
}
.combo select {
    display: block;
    appearance: none;
    width: 100%;
    height: 20px;
    padding-left: 2px;
    background: none;
    color: #000;
}
.font-name { width: 97px; }
.font-size { width: 43px; margin-left: -4px; }
.format { width: 128px; }
.cluster {
    display: flex;
    height: 22px;
    border: 1px solid #9ab7dc;
    border-radius: 2px;
    background: linear-gradient(#dbe8f7, #c5d8ef 48%, #bad0ea 50%, #d2e3f6);
}
.cluster button {
    width: 22px;
    gap: 5px;
}
.cluster button + button {
    border-left: 1px solid #b4cae6;
}
.cluster .wide {
    width: 33px;
}
.cluster .on {
    background: linear-gradient(#f9c28a, #fba847 45%, #ffd988);
}
.alignment .cluster .orient {
    width: 30px;
    gap: 3px;
}
.serif {
    font-family: "Liberation Serif", serif;
    font-size: 15px;
    color: #111;
}
.serif b, .serif u {
    font-weight: bold;
}
.big-a, .small-a {
    position: relative;
    font-weight: bold;
    padding-right: 4px;
}
.big-a { font-size: 17px; }
.small-a { font-size: 13px; }
.big-a .up, .small-a .caret {
    position: absolute;
    right: 1px;
    top: 3px;
    border-width: 3px;
}
.big-a .up { border-top: none; }
.small-a .caret { border-bottom: none; border-top-color: #2f5aa8; }
.font-color {
    color: #2b57a6;
    font-weight: bold;
    line-height: 15px;
    background: linear-gradient(#f00, #f00) 3px 14px / 16px 4px no-repeat;
    align-items: flex-start;
}
.font-color .caret {
    margin-top: 9px;
}
.percent {
    color: #222;
    font-size: 12px;
}
.decimals text {
    font-family: "Liberation Sans", Arial, sans-serif;
    font-size: 7px;
    font-weight: bold;
    fill: #222;
}
.ab, .merge-a {
    font-family: "Liberation Sans", Arial, sans-serif;
    font-size: 9px;
    font-weight: bold;
    fill: #222;
}
.sort-a, .sort-z {
    font-family: "Liberation Serif", serif;
    font-size: 17px;
    font-weight: bold;
    fill: #2d52a0;
}
.sort-z {
    fill: #8e2f3c;
    font-style: italic;
}
.align-text {
    display: flex;
    flex-direction: column;
    align-items: flex-start;
    gap: 7px;
    margin: 6px 0 3px 2px;
    padding: 3px 3px 0 4px;
    border-left: 1px solid #a9c2e0;
}
.orange {
    gap: 2px;
    height: 22px;
    padding: 0 3px 0 2px;
    border: 1px solid #b48a50;
    border-radius: 2px;
    background: linear-gradient(#fbc27c, #fdb95a 40%, #ffa93a 50%, #ffe08c);
}
.merge {
    padding-right: 0;
}
.drop {
    display: flex;
    align-items: center;
    height: 20px;
    padding: 0 2px;
    border-left: 1px solid #d39a50;
}
.alignment .group-body {
    width: 121px;
}
.bigs {
    display: flex;
}
.big {
    flex-direction: column;
    justify-content: flex-start;
    width: 42px;
    padding-top: 5px;
    line-height: 13px;
}
.big svg {
    margin-bottom: 4px;
}
.big .caret {
    margin-left: 2px;
    vertical-align: middle;
}
.big > .caret {
    margin: 5px 0 0;
}
.conditional { width: 69px; }
.as-table { width: 55px; }
.cell-styles { width: 43px; }
.editing .small-buttons {
    width: 83px;
}

/* formula bar */
.formula-bar {
    display: flex;
    flex: none;
    height: 23px;
    margin-top: 4px;
    border-top: 1px solid #7a9cc6;
    border-bottom: 1px solid #7a9cc6;
    background-color: #fff;
    font-family: Lato, sans-serif;
    font-size: 13px;
    color: #000;
}
.name-box {
    width: 138px;
    text-align: center;
}
.name-drop {
    width: 20px;
}
.fx-area {
    display: flex;
    align-items: center;
    justify-content: space-between;
    width: 85px;
    padding: 0 6px;
    border: 1px solid #7a9cc6;
    border-width: 0 1px;
    border-radius: 11px 0 0 11px;
    background: linear-gradient(#f0f6ff, #cbdcf5 50%, #b3ccf0);
}
.knob {
    width: 8px;
    height: 8px;
    border-radius: 50%;
    background: linear-gradient(135deg, #a7b1c2, #fff);
}
.fx {
    font-family: "Liberation Serif", serif;
    font-style: italic;
    font-weight: bold;
    font-size: 16px;
    color: #4d5765;
}
.fx small {
    font-size: 11px;
}
.formula {
    flex: 1;
    padding-left: 7px;
}
.expand {
    width: 16px;
    border-left: 1px solid #7a9cc6;
    background: linear-gradient(#e4eefb, #a9c4ea);
}

/* worksheet */
.workbook {
    display: flex;
    flex: 1;
    min-height: 0;
    margin-top: 2px;
    border-top: 1px solid #7a9cc6;
}
.sheet-wrap {
    flex: 1;
    overflow: hidden;
    background-color: #001424;
}
.sheet {
    width: 100%;
    table-layout: fixed;
    border-collapse: separate;
    border-spacing: 0;
    font-family: Lato, sans-serif;
    font-variant-ligatures: none;
}
.sheet td {
    padding: 0;
}
.c-head { width: 25px; }
.c-a { width: 111px; }
.c-b { width: 99px; }
.c-c { width: 86px; }
.c-d { width: 62px; }
.c-e { width: 43px; }
.c-f { width: 100px; }
.c-g { width: 78px; }
.c-h { width: 150px; }
.c-i { width: 70px; }
.c-j { width: 96px; }
.c-k { width: 85px; }
.c-l { width: 116px; }
.c-m { width: 78px; }
.c-n { width: 62px; }
.c-o { width: 77px; }
.sheet th {
    padding: 0;
    border-right: 1px solid #9eb6ce;
    border-bottom: 1px solid #9eb6ce;
    font-size: 13px;
    font-weight: normal;
    line-height: 17px;
    color: #27413e;
}
.sheet thead th {
    height: 20px;
    background: linear-gradient(#f9fcfd, #d3dbe9);
}
.sheet tbody th {
    vertical-align: bottom;
    background-color: #e4ecf7;
}
.sheet thead .sel {
    border-color: #f29536;
    background: linear-gradient(#f9d99f, #f1c15f);
}
.sheet tbody .sel {
    border-color: #f29536;
    background-color: #ffd58d;
}
.sheet thead .corner {
    padding: 3px 0 0 9px;
    background: #a9c4e9;
}
.r2, .r14 { height: 21px; }
.r3, .r8, .r11, .r16 { height: 29px; }
.r4, .r7, .r20 { height: 25px; }
.r5, .r19 { height: 24px; }
.r6 { height: 20px; }
.r9, .r15 { height: 31px; }
.r10 { height: 22px; }
.r12, .r13 { height: 32px; }
.r17 { height: 23px; }
.r18 { height: 30px; }
.sheet .model-title, .sheet .model-sub {
    padding-left: 5px;
    font-family: "Liberation Sans", Arial, sans-serif;
    font-weight: bold;
    color: #000;
}
.model-title {
    font-size: 33px;
    line-height: 40px;
    background-color: #ffc000;
}
.model-sub {
    font-size: 24px;
    line-height: 31px;
    background-color: #d0d0d0;
}
.sheet .fs-title, .sheet .business {
    padding-left: 3px;
    font-family: "Liberation Sans", Arial, sans-serif;
    font-weight: bold;
}
.fs-title {
    font-size: 21px;
    background-color: #393939;
    color: #64d9c3;
}
.business {
    font-size: 15px;
    line-height: 18px;
    background-color: #64d9c3;
    color: #000;
}
.profile {
    font-size: 14px;
    font-weight: bold;
    line-height: 20px;
    text-align: center;
    white-space: nowrap;
    background-color: #242935;
    color: #d9d9d9;
}
.sheet .copyright {
    padding-left: 3px;
    vertical-align: bottom;
    font-size: 12px;
    line-height: 20px;
    background-color: #d0d0d0;
    color: #000;
}
.box-char {
    font-family: "DejaVu Sans", sans-serif;
    font-size: 9px;
}
.offer {
    font-size: 21px;
    font-weight: bold;
    line-height: 31px;
    text-align: center;
    vertical-align: top;
    color: #fff;
}
.selection {
    position: relative;
    display: flex;
    align-items: center;
    justify-content: center;
    height: 131px;
    border: 3px double #fff;
}
.selection::after {
    content: "";
    position: absolute;
    right: -3px;
    bottom: -3px;
    width: 4px;
    height: 4px;
    background-color: #fff;
}

/* scroll bars */
.v-scroll {
    display: flex;
    flex-direction: column;
    align-items: center;
    width: 16px;
    padding-bottom: 6px;
    border-left: 1px solid #a8c4e8;
    background: linear-gradient(90deg, #93b2dc, #7394c2 40%, #7d9cca);
}
.v-scroll .up {
    margin: 7px 0 9px;
    border-width: 5px;
    border-top: none;
    border-bottom-color: #4a5c8c;
}
.v-scroll .caret {
    margin-top: auto;
    border-width: 5px;
    border-bottom: none;
    border-top-color: #3c4f7c;
}
.v-thumb {
    width: 14px;
    height: 55px;
    border: 1px solid #5f7aa6;
    border-radius: 2px;
    background:
        repeating-linear-gradient(#7d8896 0, #7d8896 1px, transparent 1px, transparent 2px) center / 8px 7px no-repeat,
        linear-gradient(90deg, #f5f8fc, #dfe7f1 50%, #b9c8dc 55%, #d9e3ef);
}
.v-scroll .split {
    width: 14px;
    height: 7px;
    border: 1px solid #5f86bf;
    background-color: #fff;
}

/* sheet tabs */
.sheet-tabs {
    display: flex;
    flex: none;
    height: 17px;
    gap: 3px;
    border-top: 1px solid #7a9cc6;
    border-bottom: 1px solid #5e82b6;
    background: linear-gradient(#8eadd9, #9fb9df);
}
.tab-arrows {
    display: flex;
    align-items: center;
    justify-content: space-around;
    width: 62px;
    margin-right: -3px;
    padding-right: 2px;
    background-color: #bed6f7;
}
.sheet-tab {
    position: relative;
    z-index: 0;
    height: 15px;
    padding-right: 6px;
}
.sheet-tab::before {
    content: "";
    position: absolute;
    z-index: -1;
    inset: 0;
    border: 1px solid #e8f0fb;
    border-top: none;
    box-shadow: 1px 0 0 #5e7ba8;
    transform: skewX(-42deg);
}
.cover {
    width: 83px;
    padding-right: 0;
    font-weight: bold;
    font-size: 12px;
    background: linear-gradient(90deg, #fff 60%, transparent 60%);
}
.cover::before { background-color: #fff; }
.diagram { width: 64px; }
.diagram::before { background: linear-gradient(#dae8fb, #b7d2f5); }
.projection { width: 161px; color: #000; }
.diagram, .projection { font-size: 12px; }
.projection::before { background: linear-gradient(#ffdf84, #ffc61e 40%, #ffe79d); }
.dcf { width: 97px; color: #fff; }
.dcf::before { background: linear-gradient(#83aeb2, #71a3a7 45%, #247176 50%, #9fc8c9); }
.research { width: 129px; color: #fff; }
.research::before { background: linear-gradient(#adadad, #979797 45%, #5f5f5f 50%, #c2c2c2); }
.new { width: 29px; }
.new::before { background: linear-gradient(#dae8fb, #b7d2f5); }
.h-scroll {
    display: flex;
    align-items: center;
    width: 145px;
    margin-left: auto;
    margin-right: 16px;
    background-color: #7e9ccb;
}
.h-scroll .split {
    width: 6px;
    height: 14px;
    border: 2px solid #fff;
    background-color: #7a9cc6;
}
.h-scroll .left {
    margin: 0 7px 0 6px;
}
.h-scroll .right {
    margin: 0 6px 0 auto;
}
.h-thumb {
    width: 79px;
    height: 14px;
    border: 1px solid #5f7aa6;
    border-radius: 2px;
    background:
        repeating-linear-gradient(90deg, #7d8896 0, #7d8896 1px, transparent 1px, transparent 2px) center / 7px 7px no-repeat,
        linear-gradient(#f5f8fc, #dfe7f1 50%, #b9c8dc 55%, #d9e3ef);
}

/* status bar */
.status-bar {
    display: flex;
    align-items: center;
    justify-content: space-between;
    flex: none;
    height: 21px;
    background: linear-gradient(#d5e5fa, #c4dbf9 30%, #aecaf0 35%, #d2e3f9);
}
.ready {
    width: 46px;
    padding-left: 6px;
    border-right: 1px solid #8eaed9;
    line-height: 20px;
}
.status-right {
    display: flex;
    align-items: center;
    width: 246px;
    height: 21px;
    padding: 0 4px 0 5px;
    border-left: 1px solid #fff;
    background: linear-gradient(#b5cef0, #a5c4ee 45%, #7fa8dd 50%, #a5c6ee);
}
.views {
    display: flex;
    height: 18px;
    border: 1px solid #7f9fca;
    border-radius: 2px;
}
.views button {
    width: 18px;
}
.views .on {
    background: linear-gradient(#fcd68a, #ffb83b 50%, #ffe08c);
}
.zoom-text {
    width: 45px;
    text-align: center;
}
.zoom {
    flex: 1;
    min-width: 0;
    height: 17px;
    appearance: none;
    background: linear-gradient(#4d6c9a, #4d6c9a) center / 100% 1px no-repeat;
}
.zoom::-webkit-slider-thumb {
    appearance: none;
    width: 9px;
    height: 13px;
    border: 1px solid #4d6285;
    border-radius: 1px 1px 5px 5px;
    background-color: #e7eefa;
}

/* taskbar */
.taskbar {
    display: flex;
    flex: none;
    height: 40px;
    background: linear-gradient(90deg, #20353c, #203640 50%, #1b2b3c 75%, #182540);
    color: #fff;
}
.start {
    width: 47px;
}
.search {
    display: flex;
    align-items: center;
    gap: 10px;
    width: 344px;
    padding-left: 11px;
    border: 1px solid #c8c8c8;
    background-color: #f2f2f2;
}
.search input {
    flex: 1;
    background: none;
    font-size: 14px;
}
.search input::placeholder {
    color: #3a3a3a;
}
.app {
    position: relative;
    width: 49px;
}
.running::after {
    content: "";
    position: absolute;
    left: 5px;
    right: 5px;
    bottom: 0;
    height: 2px;
    background-color: #76b9ed;
}
.current {
    background-color: #4a5b66;
}
.current::after {
    left: 0;
    right: 0;
}
.badge {
    position: absolute;
    right: 3px;
    bottom: 4px;
    width: 17px;
    height: 17px;
    border: 1px solid #c4c8cc;
    border-radius: 50%;
    background-color: #2b3138;
    font-size: 11px;
    font-weight: bold;
    line-height: 15px;
}
.tray {
    display: flex;
    align-items: center;
    gap: 9px;
    margin-left: auto;
    margin-right: 3px;
    padding-right: 20px;
    border-right: 1px solid #7d8894;
    font-family: Roboto, "Noto Sans", sans-serif;
    font-size: 12px;
    line-height: 17px;
    text-align: center;
}
.clock {
    width: 56px;
    margin-right: 7px;
}
```
